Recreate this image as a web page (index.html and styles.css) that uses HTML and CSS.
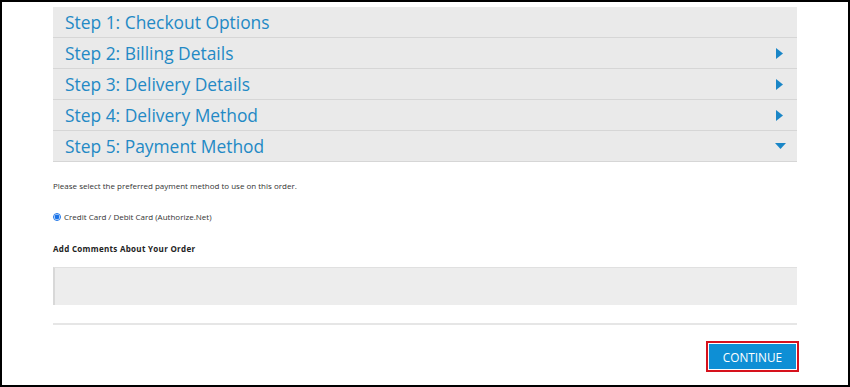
FILE: index.html
```html
<!DOCTYPE html>
<html lang="en">
<head>
    <meta charset="UTF-8">
    <meta name="viewport" content="width=device-width, initial-scale=1.0">
    <title>Checkout</title>
    <link rel="stylesheet" href="styles.css">
</head>
<body>
    <div class="frame">
        <div class="panel">
            <div class="step">
                <span>Step 1: Checkout Options</span>
            </div>
            <div class="step">
                <span>Step 2: Billing Details</span>
                <svg class="caret" width="7" height="11" viewBox="0 0 7 11"><path d="M0 0 L7 5.5 L0 11 Z" fill="#1a86c7"/></svg>
            </div>
            <div class="step">
                <span>Step 3: Delivery Details</span>
                <svg class="caret" width="7" height="11" viewBox="0 0 7 11"><path d="M0 0 L7 5.5 L0 11 Z" fill="#1a86c7"/></svg>
            </div>
            <div class="step">
                <span>Step 4: Delivery Method</span>
                <svg class="caret" width="7" height="11" viewBox="0 0 7 11"><path d="M0 0 L7 5.5 L0 11 Z" fill="#1a86c7"/></svg>
            </div>
            <div class="step open">
                <span>Step 5: Payment Method</span>
                <svg class="caret down" width="11" height="6" viewBox="0 0 11 6"><path d="M0 0 L11 0 L5.5 6 Z" fill="#1a86c7"/></svg>
            </div>
        </div>

        <div class="payment">
            <p class="hint">Please select the preferred payment method to use on this order.</p>

            <label class="option">
                <input type="radio" name="payment" checked>
                <span>Credit Card / Debit Card (Authorize.Net)</span>
            </label>

            <p class="comments-label">Add Comments About Your Order</p>
            <div class="comments"></div>

            <div class="divider"></div>

            <div class="actions">
                <button class="btn">CONTINUE</button>
            </div>
        </div>
    </div>
</body>
</html>
```

FILE: styles.css
```css
* {
    margin: 0;
    padding: 0;
    box-sizing: border-box;
}

body {
    font-family: 'Open Sans', 'Liberation Sans', sans-serif;
    background: white;
    color: #333;
}

.frame {
    width: 850px;
    height: 387px;
    border: 2px solid #000;
    padding: 5px 51px 0 51px;
}

.panel {
    background: #eaeaea;
}

.step {
    display: flex;
    align-items: center;
    justify-content: space-between;
    height: 31px;
    padding: 0 12px 0 12px;
    border-bottom: 1px solid #d6d6d6;
    color: #2389c5;
    font-size: 17.4px;
    line-height: 30px;
}

.step span {
    padding-bottom: 1px;
}

.caret {
    margin-right: 2px;
}

.caret.down {
    margin-right: -1px;
}

.payment {
    font-size: 8px;
}

.hint {
    margin-top: 18px;
    line-height: 12px;
}

.option {
    display: flex;
    align-items: center;
    gap: 3px;
    margin-top: 19px;
    height: 12px;
    line-height: 12px;
}

.option input {
    width: 8px;
    height: 8px;
    margin: 0;
    accent-color: #1a73e8;
}

.comments-label {
    margin-top: 20px;
    line-height: 12px;
    font-weight: bold;
    letter-spacing: 0.3px;
    color: #222;
}

.comments {
    margin-top: 12px;
    height: 38px;
    background: #ededed;
    border-top: 1px solid #e0e0e0;
    border-left: 2px solid #d8d8d8;
}

.divider {
    margin-top: 18px;
    height: 2px;
    background: #e6e6e6;
}

.actions {
    display: flex;
    justify-content: flex-end;
    margin-top: 16px;
}

.btn {
    background: #0e8fd5;
    color: white;
    border: 1px solid white;
    outline: 2px solid #d6121d;
    font-family: inherit;
    font-size: 11.8px;
    height: 27px;
    width: 89px;
    margin-top: 2px;
}
```
